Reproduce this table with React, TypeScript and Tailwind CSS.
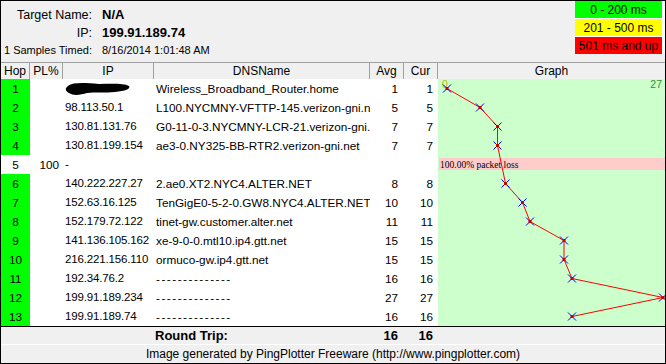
const rows = [
  { hop: "1", pl: "", ip: "", dns: "Wireless_Broadband_Router.home", avg: "1", cur: "1", hidden: true },
  { hop: "2", pl: "", ip: "98.113.50.1", dns: "L100.NYCMNY-VFTTP-145.verizon-gni.net", avg: "5", cur: "5" },
  { hop: "3", pl: "", ip: "130.81.131.76", dns: "G0-11-0-3.NYCMNY-LCR-21.verizon-gni.net", avg: "7", cur: "7" },
  { hop: "4", pl: "", ip: "130.81.199.154", dns: "ae3-0.NY325-BB-RTR2.verizon-gni.net", avg: "7", cur: "7" },
  { hop: "5", pl: "100", ip: "-", dns: "", avg: "", cur: "", lost: true },
  { hop: "6", pl: "", ip: "140.222.227.27", dns: "2.ae0.XT2.NYC4.ALTER.NET", avg: "8", cur: "8" },
  { hop: "7", pl: "", ip: "152.63.16.125", dns: "TenGigE0-5-2-0.GW8.NYC4.ALTER.NET", avg: "10", cur: "10" },
  { hop: "8", pl: "", ip: "152.179.72.122", dns: "tinet-gw.customer.alter.net", avg: "11", cur: "11" },
  { hop: "9", pl: "", ip: "141.136.105.162", dns: "xe-9-0-0.mtl10.ip4.gtt.net", avg: "15", cur: "15" },
  { hop: "10", pl: "", ip: "216.221.156.110", dns: "ormuco-gw.ip4.gtt.net", avg: "15", cur: "15" },
  { hop: "11", pl: "", ip: "192.34.76.2", dns: "--------------", avg: "16", cur: "16" },
  { hop: "12", pl: "", ip: "199.91.189.234", dns: "--------------", avg: "27", cur: "27" },
  { hop: "13", pl: "", ip: "199.91.189.74", dns: "--------------", avg: "16", cur: "16" },
]

// graph points: [x, row index]
const points: [number, number][] = [
  [9, 0], [42, 1], [59.5, 2], [59.5, 3], [67.5, 5], [84.5, 6],
  [92, 7], [126, 8], [126, 9], [134, 10], [225, 11], [134, 12],
]

function Graph() {
  const cy = (i: number) => 9.5 + i * 19
  const line = points.map(([x, i]) => `${x},${cy(i)}`).join(" ")
  return (
    <svg width="227" height="247" className="block">
      <rect x="0" y="0" width="227" height="247" fill="#ccffcc" />
      <rect x="1" y="79" width="226" height="12" fill="#ffcccc" />
      <text x="2" y="89" fontSize="9.5" fontFamily="'Liberation Serif', serif" fill="#000">
        100.00% packet loss
      </text>
      <text x="4" y="9" fontSize="10.5" fontFamily="'Liberation Sans', sans-serif" fill="#b8b800">0</text>
      <text x="224" y="9" fontSize="10.5" textAnchor="end" fontFamily="'Liberation Sans', sans-serif" fill="#2f8f2f">27</text>
      <polyline points={line} fill="none" stroke="#ff0000" strokeWidth="1" />
      {points.map(([x, i], k) => (
        <g key={k}>
          <path d={`M${x - 4} ${cy(i) - 4} L${x + 4} ${cy(i) + 4} M${x + 4} ${cy(i) - 4} L${x - 4} ${cy(i) + 4}`} stroke="#0000ff" strokeWidth="1" />
          <rect x={x - 1.5} y={cy(i) - 1.5} width="3" height="3" fill="#cc0000" />
        </g>
      ))}
    </svg>
  )
}

export default function App() {
  return (
    <div className="w-[666px] h-[364px] border border-black bg-[#f0f0f0] flex flex-col overflow-hidden text-black font-['Liberation_Sans',Arial,sans-serif]">
      {/* Target info + legend */}
      <div className="h-[64px] flex justify-between">
        <div className="grid grid-cols-[91px_auto] gap-x-[10px] items-center content-start pt-[5px]">
          <span className="text-right text-[12.5px] leading-[18px]">Target Name:</span>
          <span className="text-[13px] font-bold leading-[18px]">N/A</span>
          <span className="text-right text-[12.5px] leading-[18px]">IP:</span>
          <span className="text-[13px] font-bold leading-[18px]">199.91.189.74</span>
          <span className="text-right text-[11px] leading-[17px] whitespace-nowrap">1 Samples Timed:</span>
          <span className="text-[11px] leading-[17px]">8/16/2014 1:01:48 AM</span>
        </div>
        <div className="self-start flex flex-col gap-[1px] bg-white pr-[3px]">
          <div className="w-[87px] h-[17px] bg-[#00ff00] text-[12px] flex items-center justify-center">0 - 200 ms</div>
          <div className="w-[87px] h-[17px] bg-[#ffff00] text-[12px] flex items-center justify-center">201 - 500 ms</div>
          <div className="w-[87px] h-[17px] bg-[#ff0000] text-[12px] flex items-center justify-center">501 ms and up</div>
        </div>
      </div>

      {/* Column headers */}
      <div className="flex h-[17px] border-t border-[#a0a0a0] text-[12px] leading-[16px]">
        <div className="w-[29px] border-r border-[#a0a0a0] text-center">Hop</div>
        <div className="w-[33px] border-r border-[#a0a0a0] text-center">PL%</div>
        <div className="w-[91px] border-r border-[#a0a0a0] text-center">IP</div>
        <div className="w-[216px] border-r border-[#a0a0a0] text-center">DNSName</div>
        <div className="w-[34px] border-r border-[#a0a0a0] text-center">Avg</div>
        <div className="w-[34px] border-r border-[#a0a0a0] text-center">Cur</div>
        <div className="flex-1 text-center">Graph</div>
      </div>

      {/* Body */}
      <div className="flex h-[247px] bg-white text-[11.75px]">
        <div className="w-[437px] flex flex-col">
          {rows.map((r) => (
            <div key={r.hop} className="flex h-[19px] items-center">
              <div className={`w-[29px] h-full flex items-center justify-center ${r.lost ? "bg-white" : "bg-[#00ff00]"}`}>{r.hop}</div>
              <div className="w-[33px] text-right pr-[4px]">{r.pl}</div>
              <div className="w-[91px] pl-[2px] whitespace-nowrap overflow-hidden text-[11.5px] tracking-[-0.15px]">
                {r.hidden ? (
                  <svg width="66" height="16" className="block">
                    <path d="M3 5 C8 1 20 2 34 3 C46 3 58 2 64 5 C66 8 60 10 50 11 C40 12 30 11 22 12 C16 14 8 15 4 12 C0 10 0 7 3 5 Z" fill="#000" />
                  </svg>
                ) : (
                  r.ip
                )}
              </div>
              <div className="w-[216px] pl-[2px] whitespace-nowrap overflow-hidden">
                {r.dns.startsWith("-") ? <span className="tracking-[1.5px]">{r.dns}</span> : r.dns}
              </div>
              <div className="w-[34px] text-right pr-[6px]">{r.avg}</div>
              <div className="w-[34px] text-right pr-[5px]">{r.cur}</div>
            </div>
          ))}
        </div>
        <div className="flex-1">
          <Graph />
        </div>
      </div>

      {/* Round trip */}
      <div className="flex h-[18px] border-t border-black items-center text-[13px] font-bold">
        <div className="w-[153px]" />
        <div className="w-[216px] pl-[1px]">Round Trip:</div>
        <div className="w-[34px] text-right pr-[6px]">16</div>
        <div className="w-[34px] text-right pr-[5px]">16</div>
      </div>

      {/* Footer */}
      <div className="flex-1 border-t border-white flex items-center justify-center text-[12px]">
        Image generated by PingPlotter Freeware (http://www.pingplotter.com)
      </div>
    </div>
  )
}
